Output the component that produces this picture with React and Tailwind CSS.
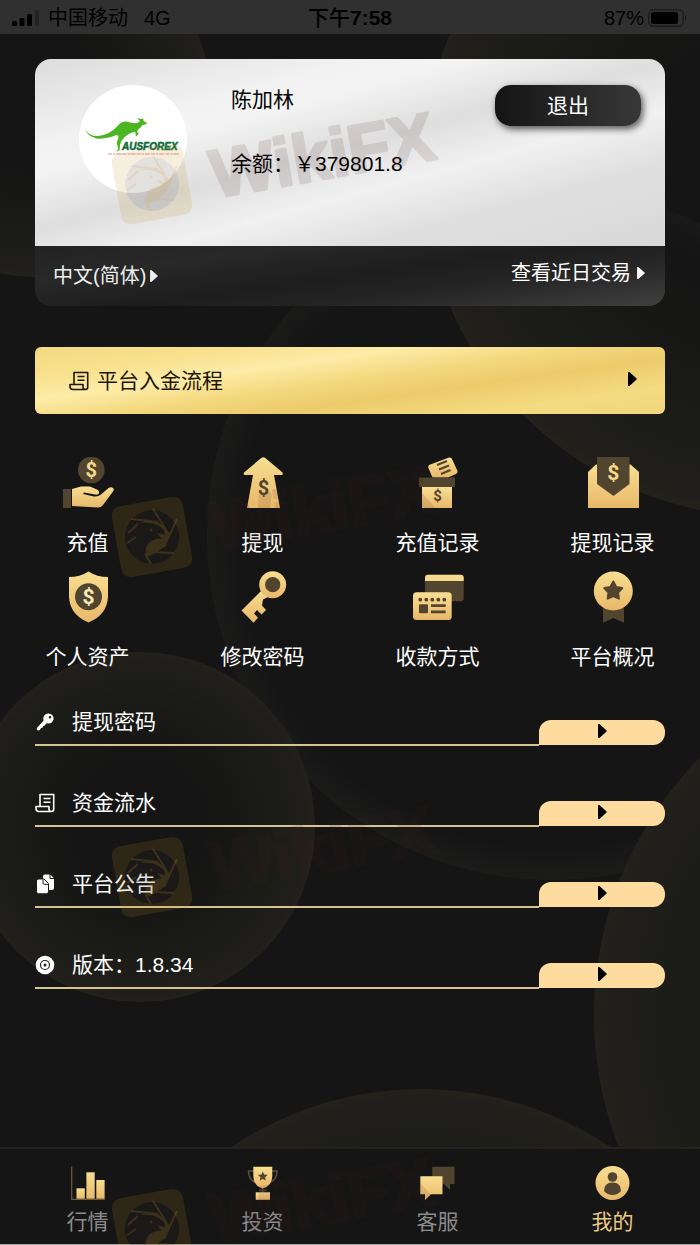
import React from 'react';

const GOLD = 'url(#gold)';
const DARK = '#51452f';

function Dollar({ x, y, size, fill }) {
  return (
    <text
      x={x}
      y={y}
      fontSize={size}
      fill={fill}
      textAnchor="middle"
      fontWeight="bold"
      fontFamily="Roboto, Liberation Sans, sans-serif"
    >
      $
    </text>
  );
}

function starPoints(cx, cy, r, inner) {
  return Array.from({ length: 10 }, (_, i) => {
    const a = (Math.PI / 5) * i - Math.PI / 2;
    const d = i % 2 ? inner : r;
    return `${(cx + d * Math.cos(a)).toFixed(1)},${(cy + d * Math.sin(a)).toFixed(1)}`;
  }).join(' ');
}

function GridIcon({ children }) {
  return (
    <svg className="size-[52px]" viewBox="0 0 52 52" aria-hidden="true">
      {children}
    </svg>
  );
}

function TabIcon({ children }) {
  return (
    <svg className="h-[34px] w-[35px]" viewBox="0 0 35 34" aria-hidden="true">
      {children}
    </svg>
  );
}

const actions = [
  {
    label: '充值',
    icon: (
      <GridIcon>
        <circle cx="29.3" cy="13" r="13.3" fill={DARK} />
        <Dollar x={29.3} y={20} size={20} fill="#f8d98a" />
        <rect x="1" y="32" width="8" height="19" fill={DARK} />
        <path
          d="M10 32 L19 29.500 H28 L36 33 Q38 35 36.500 37 Q35.500 38 33 37.500 L22 35.500 L21 37 L32 39.500 Q36 40 39 37.500 L46.500 31 Q49 29.500 51 31 Q52.500 32.500 51 34.500 L41 48 Q39 50.500 36 50.500 L10 49 Z"
          fill={GOLD}
        />
      </GridIcon>
    ),
  },
  {
    label: '提现',
    icon: (
      <GridIcon>
        <path
          d="M24.500 .8 Q26.200 -.4 28 .8 L45.500 15.500 Q46.500 18 44.500 18 H37 L43 51 H10 L16 18 H8 Q6 18 7 15.500 Z"
          fill={GOLD}
        />
        <Dollar x={26.5} y={38} size={20} fill={DARK} />
      </GridIcon>
    ),
  },
  {
    label: '充值记录',
    icon: (
      <GridIcon>
        <path d="M17 8 L37 .5 Q39 0 40 2 L45.500 14 Q46 16 44 17 L36 20.500 H20.500 L16 10 Z" fill={GOLD} />
        <path d="M25 8 L35 4 M27 12.500 L37 8.500 M29 17 L38.500 13" stroke={DARK} strokeWidth="2.200" />
        <rect x="7" y="20.500" width="36" height="9.500" fill={DARK} />
        <rect x="10" y="30" width="30" height="21" fill={GOLD} />
        <Dollar x={25.5} y={44} size={15} fill={DARK} />
      </GridIcon>
    ),
  },
  {
    label: '提现记录',
    icon: (
      <GridIcon>
        <path d="M1 15 L9 7.500 H43.500 L52 15 V51 H1 Z" fill={GOLD} />
        <path d="M10 0 H42.500 V27 L26.500 39 L10 27 Z" fill={DARK} />
        <Dollar x={26.3} y={23} size={21} fill="#f8d98a" />
      </GridIcon>
    ),
  },
  {
    label: '个人资产',
    icon: (
      <GridIcon>
        <path
          d="M26.500 .5 Q35 6 46 6 V26 Q45 44 26.500 51.500 Q8 44 7 26 V6 Q18 6 26.500 .5 Z"
          fill={GOLD}
        />
        <circle cx="26.500" cy="25.700" r="13.500" fill={DARK} />
        <Dollar x={26.5} y={33} size={21} fill="#fbeab4" />
      </GridIcon>
    ),
  },
  {
    label: '修改密码',
    icon: (
      <GridIcon>
        <path
          d="M26 18 L4.500 39.500 L16.500 51.700 L21 46.800 L17 42.500 L20 39 L24.500 43.500 L29 39 L25 34.500 L26 28.500 L33 25 Z"
          fill={GOLD}
        />
        <circle cx="35.700" cy="13.700" r="13.500" fill={GOLD} />
        <circle cx="35.700" cy="13.700" r="7.600" fill={DARK} />
      </GridIcon>
    ),
  },
  {
    label: '收款方式',
    icon: (
      <GridIcon>
        <rect x="13" y="3.700" width="38.700" height="26.500" rx="3" fill={DARK} />
        <path d="M13 10 V6.700 Q13 3.700 16 3.700 H48.700 Q51.700 3.700 51.700 6.700 V10 Z" fill="#f6da8e" />
        <rect x="1" y="21.300" width="38.700" height="27.700" rx="3.500" fill={GOLD} />
        {[8.3, 14.3, 20.3, 26.3, 32.3].map((x) => (
          <circle key={x} cx={x} cy="28.700" r="1.900" fill={DARK} />
        ))}
        <rect x="7" y="33.300" width="9" height="9" rx="1" fill={DARK} />
        <path d="M19 34.700 H33.700 M19 40.800 H33.700" stroke={DARK} strokeWidth="2.800" />
      </GridIcon>
    ),
  },
  {
    label: '平台概况',
    icon: (
      <GridIcon>
        <path d="M16 34 H37 V51.700 L26.500 47 L16 51.700 Z" fill={DARK} />
        <circle cx="26.300" cy="20" r="19.500" fill={GOLD} />
        <polygon
          points={starPoints(26.3, 20, 9.5, 5)}
          fill={DARK}
          stroke={DARK}
          strokeWidth="2"
          strokeLinejoin="round"
        />
      </GridIcon>
    ),
  },
];

function ScrollIcon() {
  return (
    <svg
      className="size-5 shrink-0"
      viewBox="0 0 20 20"
      fill="none"
      stroke="currentColor"
      strokeWidth="1.600"
      strokeLinejoin="round"
      aria-hidden="true"
    >
      <path d="M5 13.500 V1.500 H18.700 V16 Q18.700 18.500 16.500 18.500 Q14 18.500 14 16 V13.500 H1 V15.500 Q1 18.500 4 18.500 H16.500" />
      <path d="M8.500 5.500 H15.500 M8.500 9.200 H15.500" />
    </svg>
  );
}

function SolidIcon({ children }) {
  return (
    <svg className="size-5 shrink-0" viewBox="0 0 20 20" aria-hidden="true">
      {children}
    </svg>
  );
}

const rows = [
  {
    label: '提现密码',
    icon: (
      <SolidIcon>
        <path
          fillRule="evenodd"
          fill="#fff"
          d="M13.500 1.500 A5 5 0 1 1 12.200 11.300 L10.800 11.800 L10 13.500 L8.300 14 L7.500 15.700 L6 16 L5 17.800 Q3.500 19 2 18 Q1.200 16.500 2.300 15.500 L8.700 8.500 A5 5 0 0 1 13.500 1.500 Z M15 4 A1.300 1.300 0 1 0 15 6.600 A1.300 1.300 0 1 0 15 4 Z"
        />
      </SolidIcon>
    ),
  },
  { label: '资金流水', icon: <ScrollIcon /> },
  {
    label: '平台公告',
    icon: (
      <SolidIcon>
        <path d="M10 .5 H14.500 V4 Q14.500 5 15.500 5 H19 V14 Q19 16 17 16 H8 V2.500 Q8 .5 10 .5 Z" fill="#fff" />
        <path d="M15.500 .8 L18.800 4 H15.500 Z" fill="#fff" />
        <path
          d="M3.500 5 H9 L13.500 9.500 V17.500 Q13.500 19.800 11.500 19.800 H3.500 Q1.500 19.800 1.500 17.500 V7 Q1.500 5 3.500 5 Z"
          fill="#fff"
          stroke="#1b1a17"
          strokeWidth="1"
        />
        <path d="M8 5.500 V9 Q8 10.300 9.300 10.300 H13" fill="none" stroke="#1b1a17" strokeWidth="1" />
      </SolidIcon>
    ),
  },
  {
    label: '版本：1.8.34',
    icon: (
      <SolidIcon>
        <circle cx="10" cy="10" r="9.300" fill="#fff" />
        <circle cx="10" cy="10" r="4.500" fill="none" stroke="#222" strokeWidth="1.200" />
        <circle cx="10" cy="10" r="1.500" fill="#222" />
      </SolidIcon>
    ),
  },
];

const tabs = [
  {
    label: '行情',
    icon: (
      <TabIcon>
        <path d="M1.700 .5 V33.300 H35" fill="none" stroke="#6b5c3c" strokeWidth="1.200" />
        <rect x="6.500" y="22.300" width="8.300" height="10.400" fill={GOLD} />
        <rect x="16.400" y="6.300" width="8.300" height="26.400" fill={GOLD} />
        <rect x="26.300" y="14" width="8.300" height="18.700" fill={GOLD} />
      </TabIcon>
    ),
  },
  {
    label: '投资',
    icon: (
      <TabIcon>
        <path
          d="M9 5 H3.500 Q3.500 14.500 12 17 M26.500 5 H32 Q32 14.500 23.500 17 M17.700 21 V27"
          fill="none"
          stroke="#5d503a"
          strokeWidth="1.500"
        />
        <path d="M8.300 .7 H27.300 V10 Q27.300 19.500 17.800 22.500 Q8.300 19.500 8.300 10 Z" fill={GOLD} />
        <polygon points={starPoints(17.8, 10.5, 5, 2.4)} fill={DARK} />
        <rect x="14" y="23.500" width="7.500" height="1.800" fill={DARK} />
        <rect x="10.700" y="26.300" width="14.300" height="7.500" fill={GOLD} />
      </TabIcon>
    ),
  },
  {
    label: '客服',
    icon: (
      <TabIcon>
        <path d="M12.300 .7 H34.500 V18 H30 V24 L24 18 H12.300 Z" fill={DARK} />
        <path d="M.3 10.300 H22.500 V28.300 H11 L5 34 V28.300 H.3 Z" fill={GOLD} />
      </TabIcon>
    ),
  },
  {
    label: '我的',
    active: true,
    icon: (
      <TabIcon>
        <circle cx="17.500" cy="17" r="17" fill={GOLD} />
        <circle cx="17.500" cy="11" r="4.800" fill={DARK} />
        <path d="M9 25 Q9 16.500 17.500 16.500 Q26 16.500 26 25 Q22.500 29 17.500 29 Q12.500 29 9 25 Z" fill={DARK} />
      </TabIcon>
    ),
  },
];

function Triangle({ small }) {
  return (
    <svg
      className={small ? 'h-3 w-2 shrink-0' : 'h-[14px] w-[9px] shrink-0'}
      viewBox="0 0 9 14"
      preserveAspectRatio="none"
      aria-hidden="true"
    >
      <path d="M.5 .5 H1.500 L8.500 7 L1.500 13.500 H.5 Z" fill="currentColor" stroke="currentColor" strokeLinejoin="round" />
    </svg>
  );
}

function Backdrop() {
  return (
    <svg
      className="pointer-events-none absolute inset-0 h-full w-full"
      viewBox="0 0 700 1245"
      preserveAspectRatio="xMidYMin slice"
      aria-hidden="true"
    >
      <defs>
        <linearGradient id="gold" x1="0" y1="0" x2="0" y2="1">
          <stop offset="0" stopColor="#f8de92" />
          <stop offset="1" stopColor="#e9b869" />
        </linearGradient>
        <radialGradient id="orb">
          <stop offset="0.300" stopColor="#151515" stopOpacity="0.300" />
          <stop offset="0.800" stopColor="#1c1c18" />
          <stop offset="0.970" stopColor="#201f1b" />
          <stop offset="1" stopColor="#24211b" />
        </radialGradient>
        <radialGradient id="ring">
          <stop offset="0.900" stopColor="#1a1a1a" stopOpacity="0" />
          <stop offset="1" stopColor="#1b1b1a" />
        </radialGradient>
      </defs>
      <circle cx="552" cy="535" r="345" fill="url(#ring)" />
      <circle cx="35" cy="101" r="176" fill="url(#orb)" />
      <circle cx="769" cy="170" r="347" fill="url(#orb)" />
      <circle cx="140" cy="827" r="175" fill="url(#orb)" />
      <circle cx="960" cy="1015" r="366" fill="url(#orb)" />
      <circle cx="421" cy="1427" r="338" fill="url(#orb)" />
    </svg>
  );
}

function Watermark({ className }) {
  return (
    <svg className={'absolute left-[100px] h-[140px] w-[360px] ' + className} viewBox="0 -30 360 140">
      <g transform="rotate(-10 52 60)">
        <path
          fillRule="evenodd"
          fill="#c89620"
          fillOpacity="0.150"
          d="M27 24 H77 Q88 24 88 35 V85 Q88 96 77 96 H27 Q16 96 16 85 V35 Q16 24 27 24 Z M52 33 A27 27 0 1 0 52 87 A27 27 0 1 0 52 33 Z"
        />
      </g>
      <circle cx="52" cy="60" r="27" fill="#40302c" fillOpacity="0.150" />
      <g opacity="0.170">
        <path
          d="M45 44 L58 45 L65 50 L70 57 L64 70 L55 76 L47 80 Q43 71 51 64 Q58 61 62 62 L57 56 L65 58 Q65 52 57 48 Q50 45 40 46 Z"
          fill="#d8a428"
        />
        <path
          d="M31 42 L58 45 M53 32 L65 51 M77 42 L64 70 M74 76 L54 75 M51 87 L45 77 M28 56 L38 47 M27 66 L36 60"
          fill="none"
          stroke="#d8a428"
          strokeWidth="2"
        />
        <circle cx="51" cy="53" r="1.500" fill="#d8a428" />
      </g>
      <g transform="translate(115 74) rotate(-10)" opacity="0.120">
        <text
          x="0"
          y="0"
          fontSize="68"
          fontWeight="bold"
          fontFamily="Liberation Sans, sans-serif"
          fill="#46241e"
          stroke="#46241e"
          strokeWidth="3"
          strokeLinejoin="round"
        >
          WikiFX
        </text>
      </g>
    </svg>
  );
}

function Avatar() {
  return (
    <svg className="size-[108px] shrink-0 rounded-full bg-white" viewBox="0 0 108 108" role="img" aria-label="AUSFOREX">
      <g transform="scale(.3333) translate(-9 -9)">
        <path
          d="M27 140 Q38 163 66 162 Q100 160 124 133 Q135 117 155 119 Q172 126 185 122 L192 117 L183 108 L195 111 L201 109 L203 117 L213 123 L210 127 L199 129 Q196 137 187 142 L183 148 L188 155 L180 164 L178 150 L170 151 Q156 156 146 165 L136 178 L132 188 L131 205 L120 209 L127 201 L122 182 L128 166 L124 158 Q95 170 65 170 Q34 165 27 140 Z"
          fill="#4cb522"
        />
        <path d="M96 216 H312" stroke="#e9a196" strokeWidth="6" strokeDasharray="12 3 7 2 16 3" strokeOpacity="0.600" />
      </g>
      <text
        x="43"
        y="65"
        fontSize="10"
        fontWeight="bold"
        fontStyle="italic"
        fontFamily="Liberation Sans, sans-serif"
        fill="#0c6b38"
        stroke="#0c6b38"
        strokeWidth="0.500"
      >
        AUSFOREX
      </text>
    </svg>
  );
}

function StatusBar() {
  return (
    <header className="relative grid h-[34px] grid-cols-3 items-center bg-[#303030] px-3 pt-[2px] text-[20px] leading-8 text-black">
      <div className="flex items-center gap-2">
        <svg className="h-4 w-7" viewBox="0 0 28 16" aria-hidden="true">
          <rect x="0" y="11" width="5" height="5" rx="1.500" />
          <rect x="7.500" y="8" width="5" height="8" rx="1.500" />
          <rect x="15" y="4" width="5" height="12" rx="1.500" />
          <rect x="23" y="0" width="4" height="16" rx="1.500" fill="#232323" />
        </svg>
        <span>中国移动</span>
        <span className="pl-2">4G</span>
      </div>
      <div className="text-center text-[21px] font-medium">
        下午<span className="font-bold">7:58</span>
      </div>
      <div className="flex items-center justify-end gap-1">
        <span>87%</span>
        <svg className="h-[18px] w-[40px]" viewBox="0 0 40 18" aria-hidden="true">
          <rect x=".7" y=".7" width="34.500" height="16.600" rx="4.500" fill="none" stroke="#1c1c1c" strokeWidth="1.400" />
          <rect x="3" y="3" width="27" height="12" rx="2.500" />
          <path d="M37 6 Q39.500 9 37 12 Z" fill="#1c1c1c" />
        </svg>
      </div>
    </header>
  );
}

export default function App() {
  return (
    <div className="relative flex min-h-screen flex-col overflow-hidden bg-[#151515] font-['Liberation_Sans','Noto_Sans_CJK_SC',sans-serif] text-[21px] leading-[30px] text-white">
      <Backdrop />
      <StatusBar />

      <main className="relative flex flex-col pb-12">
        <section className="mx-[35px] mt-[25px] overflow-hidden rounded-2xl">
          <div className="flex h-[187px] items-start bg-[linear-gradient(165deg,#dcdcdc_0%,#f1f1f1_24%,#f4f4f4_32%,#dedede_48%,#f1f1f1_62%,#e0e0e0_76%,#d8d8d8_100%)] pt-[26px] pr-6 pl-11 text-black">
            <Avatar />
            <div className="ml-11 flex flex-1 flex-col gap-[34px]">
              <span>陈加林</span>
              <span>余额：￥379801.8</span>
            </div>
            <button
              type="button"
              className="h-[41px] w-[146px] rounded-2xl bg-gradient-to-r from-[#151515] to-[#383838] text-white shadow-[2px_3px_7px_rgba(0,0,0,0.65)]"
            >
              退出
            </button>
          </div>
          <div className="flex h-[60px] items-start justify-between bg-[linear-gradient(172deg,#232323_0%,#282828_25%,#1d1d1d_50%,#262626_70%,#404040_100%)] pr-5 pl-[18px] text-[20px]">
            <button type="button" className="flex h-[60px] items-center gap-1 text-[#eeeeee]">
              中文(简体)
              <Triangle small />
            </button>
            <a href="#trades" className="flex h-[54px] items-center gap-[6px]">
              查看近日交易
              <Triangle small />
            </a>
          </div>
        </section>

        <a
          href="#deposit-guide"
          className="mx-[35px] mt-[41px] flex h-[67px] items-center rounded-md bg-[linear-gradient(172deg,#f3d982_0%,#f8e08c_18%,#fdeca8_34%,#f3d87e_50%,#eccb6b_64%,#f4da80_82%,#f0d67e_100%)] pr-7 pl-[34px] text-[#1d1706]"
        >
          <ScrollIcon />
          <span className="ml-2 flex-1">平台入金流程</span>
          <span className="pb-1 text-black">
            <Triangle />
          </span>
        </a>

        <div className="mt-[43px] grid grid-cols-4 gap-y-[13px]">
          {actions.map((a) => (
            <button key={a.label} type="button" className="flex flex-col items-center gap-[19px]">
              {a.icon}
              <span>{a.label}</span>
            </button>
          ))}
        </div>

        <div className="mx-[35px] mt-[35px] flex flex-col gap-[42px]">
          {rows.map((r) => (
            <button key={r.label} type="button" className="flex items-end text-left">
              <span className="flex flex-1 items-center gap-[17px] border-b-2 border-[#d6c391] pb-[7px]">
                {r.icon}
                <span>{r.label}</span>
              </span>
              <span className="mb-px flex h-[25px] w-1/5 justify-center rounded-xl rounded-bl-none bg-[#fedca0] pt-1 text-black">
                <Triangle />
              </span>
            </button>
          ))}
        </div>
      </main>

      <nav className="relative mt-auto grid grid-cols-4 border-t-2 border-b border-t-[#232323] border-b-[#a8a8a8] bg-[#151515] pt-[17px] pb-[7px]">
        {tabs.map((t) => (
          <a
            key={t.label}
            href={'#' + t.label}
            className={'flex flex-col items-center gap-[7px] ' + (t.active ? 'text-[#e9c983]' : 'text-[#8c8c8c]')}
          >
            {t.icon}
            <span>{t.label}</span>
          </a>
        ))}
      </nav>

      <div className="pointer-events-none absolute inset-0 overflow-hidden" aria-hidden="true">
        <Watermark className="top-[94px]" />
        <Watermark className="top-[447px]" />
        <Watermark className="top-[787px]" />
        <Watermark className="top-[1139px]" />
      </div>
    </div>
  );
}
